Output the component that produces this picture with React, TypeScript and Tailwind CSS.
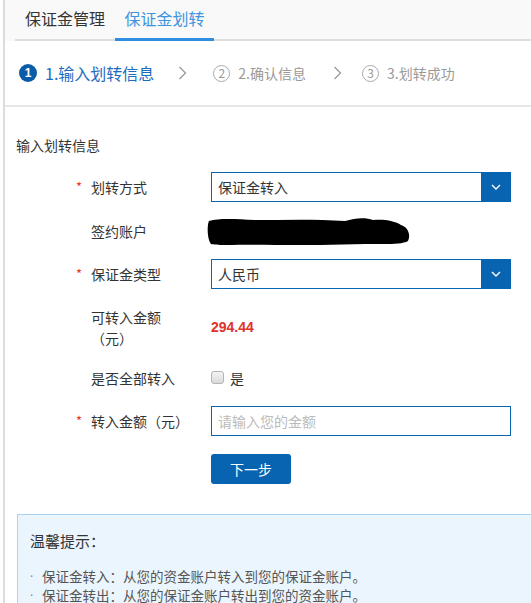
import React from "react";

const cjk = { fontFamily: '"Noto Sans CJK SC", "Noto Sans", sans-serif' };

function Chevron() {
  return (
    <svg width="9" height="16" viewBox="0 0 9 16" className="shrink-0">
      <polyline points="1.5,2 7.5,8 1.5,14" fill="none" stroke="#9a9a9a" strokeWidth="1.3" />
    </svg>
  );
}

function Select({ value }: { value: string }) {
  return (
    <div className="flex h-[30px] w-[300px] border border-[#0863b0] bg-white">
      <div className="flex flex-1 items-center pl-[6px] text-[14px] text-[#333]">{value}</div>
      <div className="flex w-[29px] items-center justify-center bg-[#0863b0]">
        <svg width="10" height="6" viewBox="0 0 10 6">
          <polyline points="1,1 5,5 9,1" fill="none" stroke="#fff" strokeWidth="1.4" />
        </svg>
      </div>
    </div>
  );
}

function Label({ req, children }: { req?: boolean; children: React.ReactNode }) {
  return (
    <div className="flex w-[206px] shrink-0 items-start pl-[71px]">
      <span className="w-[15px] text-[13px] leading-[20px] text-[#e8352e]">{req ? "*" : ""}</span>
      <span className="w-[104px] text-[14px] leading-[21px] text-[#333]">{children}</span>
    </div>
  );
}

function Tip({ children }: { children: React.ReactNode }) {
  return (
    <div className="flex h-[19px] items-center">
      <span className="w-[12px] text-[12px] leading-[19px] text-[#888]" style={{ fontFamily: '"Noto Sans", sans-serif' }}>
        ·
      </span>
      <span className="leading-[19px]">{children}</span>
    </div>
  );
}

export default function App() {
  return (
    <div className="relative h-[603px] w-[531px] overflow-hidden bg-white pl-[3px] [text-spacing-trim:space-all]" style={cjk}>
      <div className="h-full border-l-2 border-[#dcdcdc]">
        {/* tabs header */}
        <div className="h-[41px] bg-[#f9f9f9] pl-[10px]">
          <div className="flex h-full border-b-2 border-[#dedede]">
            <div className="w-[100px] text-center text-[16px] leading-[36px] text-[#333]">保证金管理</div>
            <div className="-mb-[2px] w-[99px] border-b-[3px] border-[#2f8ee0] text-center text-[16px] leading-[36px] text-[#3f94dd]">
              保证金划转
            </div>
          </div>
        </div>

        {/* steps */}
        <div className="flex h-[66px] items-center border-b-2 border-[#e6e6e6] pl-[14px]">
          <div className="flex h-[18px] w-[18px] items-center justify-center rounded-full bg-[#0b5ca8] text-[12px] font-bold leading-none text-white" style={{ fontFamily: '"Liberation Sans", sans-serif' }}>
            1
          </div>
          <span className="ml-[8px] text-[16px] text-[#1e6cbd]">1.输入划转信息</span>
          <span className="ml-[24px]"><Chevron /></span>
          <div className="ml-[26px] flex h-[17px] w-[17px] items-center justify-center rounded-full border border-[#aaa] text-[12px] leading-none text-[#999]">
            2
          </div>
          <span className="ml-[8px] text-[14px] text-[#999]">2.确认信息</span>
          <span className="ml-[27px]"><Chevron /></span>
          <div className="ml-[20px] flex h-[17px] w-[17px] items-center justify-center rounded-full border border-[#aaa] text-[12px] leading-none text-[#999]">
            3
          </div>
          <span className="ml-[8px] text-[14px] text-[#999]">3.划转成功</span>
        </div>

        {/* form */}
        <div className="mt-[28px] pl-[11px] text-[14px] leading-[20px] text-[#333]">输入划转信息</div>

        <div className="mt-[17px] flex items-center">
          <Label req>划转方式</Label>
          <Select value="保证金转入" />
        </div>

        <div className="mt-[14px] flex h-[30px] items-center">
          <Label>签约账户</Label>
          <svg width="206" height="32" viewBox="0 0 206 32" className="-ml-[6px]">
            <path
              d="M4,6 C2,10 2,24 6,29 C12,31 40,29 70,30 C100,30 130,30 160,29 C180,29 196,30 203,26 C206,20 203,12 196,10 C190,6 180,4 168,5 C160,2 150,3 140,6 C110,4 80,5 50,5 C30,4 14,3 4,6 Z"
              fill="#000"
            />
          </svg>
        </div>

        <div className="mt-[13px] flex items-center">
          <Label req>保证金类型</Label>
          <Select value="人民币" />
        </div>

        <div className="mt-[18px] flex items-center">
          <Label>可转入金额（元）</Label>
          <span className="-mt-[2px] text-[14px] font-bold text-[#e0312c]" style={{ fontFamily: '"Liberation Sans", Arial, sans-serif' }}>
            294.44
          </span>
        </div>

        <div className="mt-[14px] flex h-[30px] items-center">
          <Label>是否全部转入</Label>
          <span className="-mt-[2px] h-[13px] w-[13px] rounded-[3px] border border-[#b5b5b5] bg-gradient-to-b from-[#f4f4f4] to-[#dadada]" />
          <span className="ml-[6px] text-[14px] text-[#333]">是</span>
        </div>

        <div className="mt-[13px] flex items-center">
          <Label req>转入金额（元）</Label>
          <input
            className="h-[30px] w-[300px] border border-[#0863b0] pl-[6px] text-[14px] outline-none placeholder:text-[#bbb]"
            placeholder="请输入您的金额"
            style={cjk}
          />
        </div>

        <div className="mt-[18px] pl-[206px]">
          <button className="h-[30px] w-[80px] rounded-[3px] bg-[#0863b0] text-[14px] text-white" style={cjk}>
            下一步
          </button>
        </div>

        {/* tips */}
        <div className="ml-[12px] mt-[30px] w-[540px] border border-[#aad2f2] bg-[#ebf5fd] pl-[12px] pt-[14px] pb-[20px]">
          <div className="text-[15px] leading-[24px] text-[#333]">温馨提示：</div>
          <div className="mt-[14px] text-[13.5px] text-[#555]">
            <Tip>保证金转入：从您的资金账户转入到您的保证金账户。</Tip>
            <Tip>保证金转出：从您的保证金账户转出到您的资金账户。</Tip>
          </div>
        </div>
      </div>
    </div>
  );
}
